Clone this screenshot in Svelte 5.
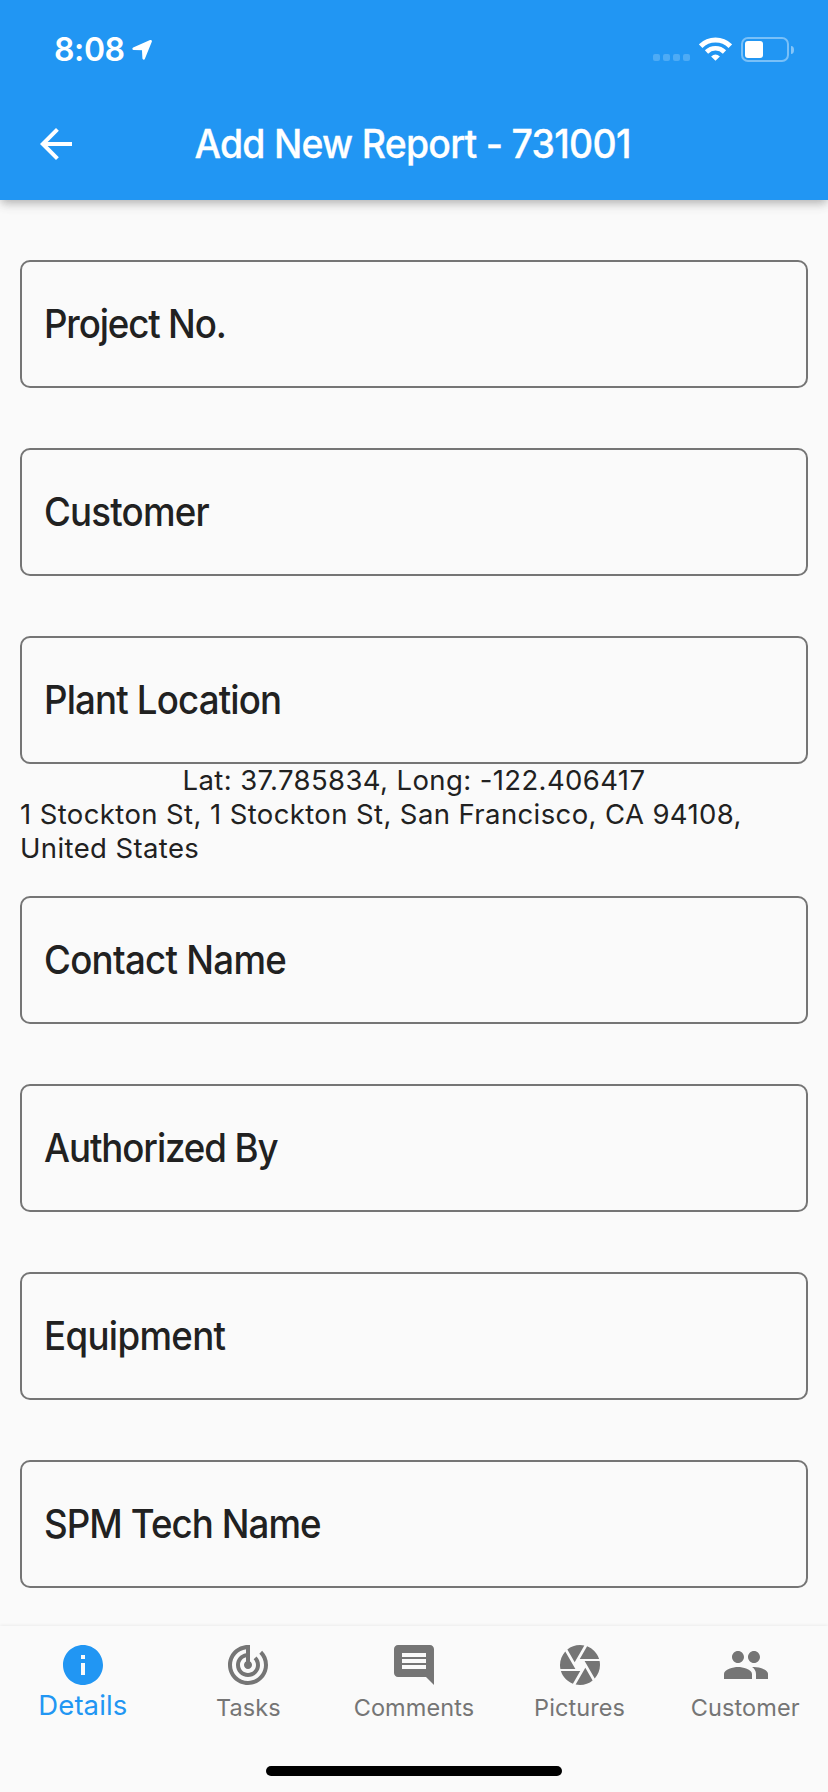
<script>
  const before = [
    { label: 'Project No.', spacing: -1.23 },
    { label: 'Customer', spacing: -0.86 },
    { label: 'Plant Location', spacing: -0.9 }
  ];
  const after = [
    { label: 'Contact Name', spacing: -0.75 },
    { label: 'Authorized By', spacing: -1.15 },
    { label: 'Equipment', spacing: -0.7 },
    { label: 'SPM Tech Name', spacing: -0.98 }
  ];
  const tabs = [
    { label: 'Details', active: true, icon: 'M12 2C6.48 2 2 6.48 2 12s4.48 10 10 10 10-4.48 10-10S17.52 2 12 2zm1 15h-2v-6h2v6zm0-8h-2V7h2v2z' },
    { label: 'Tasks', icon: 'M19.07 4.93l-1.41 1.41C19.1 7.79 20 9.79 20 12c0 4.42-3.58 8-8 8s-8-3.58-8-8c0-4.08 3.05-7.44 7-7.93v2.02C8.16 6.57 6 9.03 6 12c0 3.31 2.69 6 6 6s6-2.69 6-6c0-1.66-.67-3.16-1.76-4.24l-1.41 1.41C15.55 9.9 16 10.9 16 12c0 2.21-1.79 4-4 4s-4-1.79-4-4c0-1.86 1.28-3.41 3-3.86v2.14c-.6.35-1 .98-1 1.72 0 1.1.9 2 2 2s2-.9 2-2c0-.74-.4-1.38-1-1.72V2h-1C6.48 2 2 6.48 2 12s4.48 10 10 10 10-4.48 10-10c0-2.76-1.12-5.26-2.93-7.07z' },
    { label: 'Comments', icon: 'M21.99 4c0-1.1-.89-2-1.99-2H4c-1.1 0-2 .9-2 2v12c0 1.1.9 2 2 2h14l4 4-.01-18zM18 14H6v-2h12v2zm0-3H6V9h12v2zm0-3H6V6h12v2z' },
    { label: 'Pictures', icon: 'M9.4 10.5l4.77-8.26C13.47 2.09 12.75 2 12 2c-2.4 0-4.6.85-6.32 2.25l3.66 6.35.06-.1zM21.54 9c-.92-2.92-3.15-5.26-6-6.34L11.88 9h9.66zm.26 1h-7.49l.29.5 4.76 8.25C21 16.97 22 14.61 22 12c0-.69-.07-1.35-.2-2zM8.54 12l-3.9-6.75C3.01 7.03 2 9.39 2 12c0 .69.07 1.35.2 2h7.49l-1.15-2zm-6.08 3c.92 2.92 3.15 5.26 6 6.34L12.12 15H2.46zm11.27 0l-3.9 6.76c.7.15 1.42.24 2.17.24 2.4 0 4.6-.85 6.32-2.25l-3.66-6.35-.93 1.6z' },
    { label: 'Customer', icon: 'M16.5 11c1.66 0 2.99-1.34 2.99-3s-1.33-3-2.99-3-3 1.34-3 3 1.34 3 3 3zm-8 0c1.66 0 2.99-1.34 2.99-3s-1.33-3-2.99-3-3 1.34-3 3 1.34 3 3 3zm0 2c-2.33 0-7 1.17-7 3.5V19h14v-2.500c0-2.330-4.670-3.500-7-3.500zm8 0c-.29 0-.62.02-.97.05 1.160.84 1.970 1.970 1.970 3.450V19h6v-2.500c0-2.330-4.670-3.500-7-3.500z' }
  ];
</script>

{#snippet field(f)}
  <div class="field"><span style="letter-spacing: {f.spacing}px">{f.label}</span></div>
{/snippet}

<div class="screen">
  <header>
    <div class="status">
      <span class="time">8:08</span>
      <svg class="loc" width="20" height="20" viewBox="0 0 20 20"><path d="M18.600 1.300 11.700 18.300 11.200 9 1.700 8.600z" fill="#fff" stroke="#fff" stroke-width="2.600" stroke-linejoin="round" /></svg>
      <div class="dots"><i></i><i></i><i></i><i></i></div>
      <svg class="wifi" width="33" height="24" viewBox="0 0 33 24" fill="none" stroke="#fff">
        <path d="M1.700 9.200A21 21 0 0 1 31.300 9.200" stroke-width="5" />
        <path d="M7.500 15A12.800 12.800 0 0 1 25.500 15" stroke-width="4.600" />
        <path d="M12.100 19.400Q16.500 15.800 20.900 19.400L16.500 23.800z" fill="#fff" stroke="none" />
      </svg>
      <div class="battery"><b></b></div>
      <div class="nub"></div>
    </div>
    <div class="bar">
      <svg width="48" height="48" viewBox="0 0 24 24" fill="#fff"><path d="M20 11H7.830l5.590-5.590L12 4l-8 8 8 8 1.410-1.410L7.830 13H20v-2z" /></svg>
      <h1>Add New Report - 731001</h1>
    </div>
  </header>

  <main>
    <div class="group">
      {#each before as f}{@render field(f)}{/each}
    </div>
    <div class="place">
      <p class="coords">Lat: 37.785834, Long: -122.406417</p>
      <p class="address">1 Stockton St, 1 Stockton St, San Francisco, CA 94108, United States</p>
    </div>
    <div class="group">
      {#each after as f}{@render field(f)}{/each}
    </div>
  </main>

  <nav>
    <div class="tabs">
      {#each tabs as t}
        <div class="tab" class:active={t.active}>
          <svg width="48" height="48" viewBox="0 0 24 24" fill="currentColor"><path d={t.icon} /></svg>
          <span>{t.label}</span>
        </div>
      {/each}
    </div>
    <div class="home"></div>
  </nav>
</div>

<style>
  :global(body) { margin: 0; background: #fafafa; }
  .screen {
    display: flex;
    flex-direction: column;
    width: 828px;
    height: 1792px;
    overflow: hidden;
    background: #fafafa;
    color: #212121;
    font-family: Inter, "Liberation Sans", sans-serif;
  }
  header {
    flex: none;
    height: 200px;
    background: #2196f3;
    color: #fff;
    box-shadow: 0 4px 8px -2px rgba(0, 0, 0, 0.18), 0 6px 10px rgba(0, 0, 0, 0.08), 0 2px 14px rgba(0, 0, 0, 0.08);
  }
  .status { display: flex; height: 88px; padding-left: 54px; box-sizing: border-box; }
  .time { width: 78px; margin-top: 30px; font-size: 32px; line-height: 40px; font-weight: 600; letter-spacing: -0.4px; }
  .loc { margin-top: 40px; }
  .dots { display: flex; gap: 3px; margin: 54px 9px 0 501px; }
  .dots i { width: 7px; height: 7px; border-radius: 2px; background: rgba(255, 255, 255, 0.2); }
  .wifi { margin: 37px 9px 0 0; }
  .battery {
    width: 48px;
    height: 25px;
    margin-top: 37px;
    padding: 2px;
    box-sizing: border-box;
    border: 2px solid rgba(255, 255, 255, 0.4);
    border-radius: 7px;
  }
  .battery b { display: block; width: 18px; height: 17px; border-radius: 3px; background: #fff; }
  .nub { width: 3px; height: 8px; margin: 46px 0 0 2px; border-radius: 0 3px 3px 0 / 0 4px 4px 0; background: rgba(255, 255, 255, 0.45); }
  .bar { display: grid; grid-template-columns: 48px 1fr 48px; align-items: center; height: 112px; padding: 0 32px; }
  h1 { margin: 0; padding-right: 3px; text-align: center; font-size: 39px; line-height: 48px; font-weight: 500; letter-spacing: -0.78px; white-space: nowrap; transform: scaleX(0.96); -webkit-text-stroke: 0.3px #fff; }
  main { flex: 1; min-height: 0; padding: 60px 20px 0; }
  .group { display: flex; flex-direction: column; gap: 60px; }
  .field {
    display: flex;
    align-items: center;
    height: 128px;
    padding: 0 22px;
    box-sizing: border-box;
    border: 2px solid #757575;
    border-radius: 10px;
    font-size: 39px;
    line-height: 48px;
    font-weight: 500;
    white-space: nowrap;
  }
  .field span { transform: scaleX(0.94); transform-origin: left center; }
  .place { margin: -1px 0 31px; font-size: 27.5px; line-height: 34px; letter-spacing: 0.39px; }
  .place p { margin: 0; }
  .coords { text-align: center; }
  nav {
    flex: none;
    display: flex;
    flex-direction: column;
    align-items: center;
    height: 166px;
    background: #fafafa;
    box-shadow: 0 -1px 3px rgba(0, 0, 0, 0.06);
  }
  .tabs { display: grid; grid-template-columns: repeat(5, 1fr); width: 100%; height: 140px; }
  .tab { display: flex; flex-direction: column; align-items: center; padding-top: 15px; color: #757575; font-size: 23.5px; letter-spacing: 0.1px; }
  .tab span { margin-top: 2.5px; line-height: 32px; }
  .active { color: #2196f3; font-size: 27.5px; }
  .active span { margin-top: 0; }
  .home { width: 296px; height: 10px; border-radius: 5px; background: #000; }
</style>
